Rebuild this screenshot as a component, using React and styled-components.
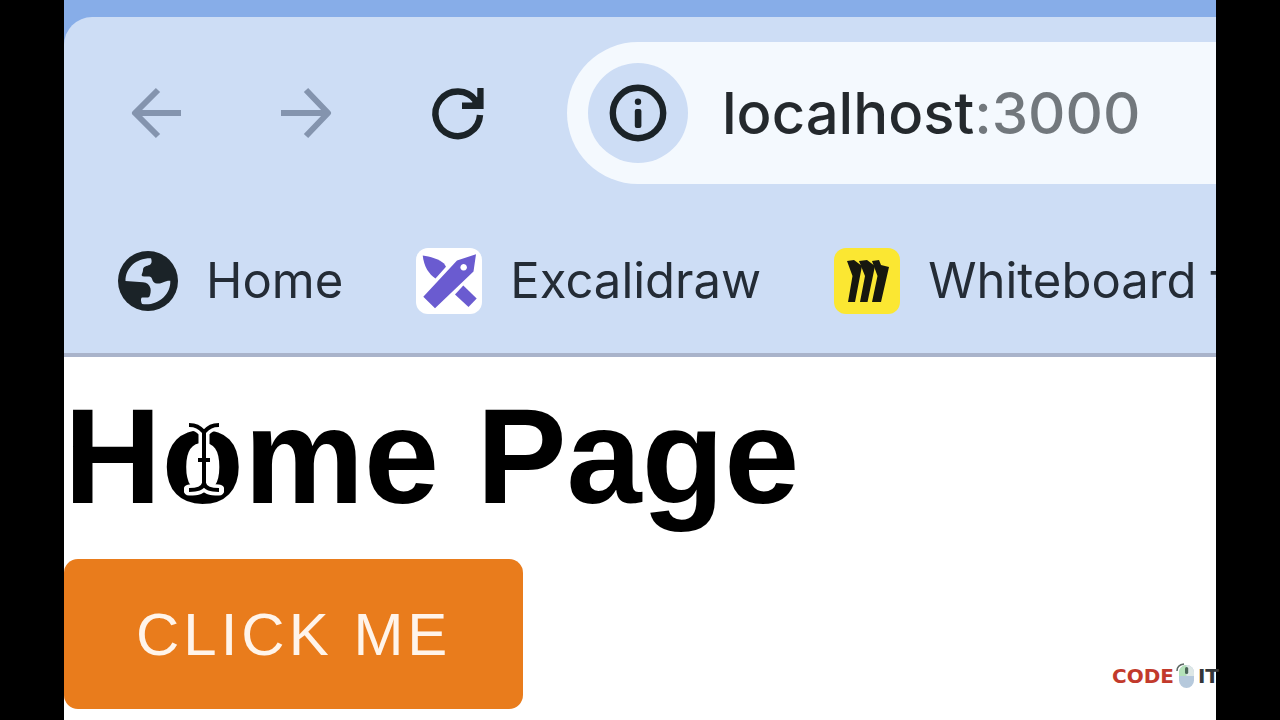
import React, { useState } from 'react';
import styled, { createGlobalStyle } from 'styled-components';

const GlobalStyle = createGlobalStyle`
    * {
        box-sizing: border-box;
    }

    body {
        margin: 0;
        background-color: #000;
        font-family: Inter, "Liberation Sans", sans-serif;
    }
`;

const Stage = styled.div`
    position: relative;
    min-height: 100vh;
    padding: 0 5%;
    overflow: hidden;
`;

const Browser = styled.div`
    display: flex;
    flex-direction: column;
    min-height: 100vh;
    background-color: #fff;
    overflow: hidden;
`;

const TabStrip = styled.div`
    background-color: #87ade8;
    padding-top: 17px;
`;

const Toolbar = styled.header`
    display: flex;
    flex-direction: column;
    gap: 63px;
    padding: 25px 0 39px;
    background-color: #cdddf5;
    border-bottom: 4px solid #a9b3ca;
    border-top-left-radius: 28px;
`;

const NavRow = styled.div`
    display: flex;
    align-items: center;
    padding-left: 62px;
`;

const NavButtons = styled.div`
    display: flex;
    flex-shrink: 0;
    gap: 90px;
    margin-right: 81px;
`;

const IconButton = styled.button`
    display: flex;
    justify-content: center;
    align-items: center;
    flex-shrink: 0;
    width: ${props => props.$size || 60}px;
    height: ${props => props.$size || 60}px;
    padding: 0;
    border: none;
    border-radius: 50%;
    background-color: ${props => props.$filled ? '#cdddf5' : 'transparent'};
    color: ${props => props.$muted ? '#8494ae' : '#1b2328'};
    cursor: pointer;
`;

const AddressBar = styled.div`
    display: flex;
    align-items: center;
    flex: 1;
    min-width: 0;
    height: 142px;
    padding-left: 21px;
    gap: 34px;
    background-color: #f4f9fe;
    border-radius: 72px 0 0 72px;
`;

/* host is dark, port is grey */
const Url = styled.input`
    flex: 1;
    min-width: 0;
    height: 80px;
    padding: 0;
    border: none;
    outline: none;
    font-family: inherit;
    font-size: 58px;
    font-weight: 500;
    color: transparent;
    caret-color: #24292d;
    background: linear-gradient(to right, #24292d 252px, #72787d 252px);
    background-clip: text;
`;

const Bookmarks = styled.nav`
    display: flex;
    align-items: center;
    gap: 73px;
    padding-left: 54px;
    overflow: hidden;
`;

const Bookmark = styled.a`
    display: flex;
    align-items: center;
    flex-shrink: 0;
    gap: 28px;
    height: 67px;
    font-size: 49px;
    line-height: 60px;
    color: #242c36;
    text-decoration: none;
    white-space: nowrap;
`;

const Favicon = styled.span`
    display: flex;
    width: 66px;
    height: 66px;
    border-radius: 12px;
    background-color: ${props => props.$color};
`;

const Page = styled.main`
    position: relative;
    font-family: "Liberation Sans", Arial, sans-serif;
`;

const Title = styled.h1`
    margin: 0;
    font-size: 135px;
    line-height: 200px;
    padding-bottom: 2px;
    font-weight: 700;
    color: #000;
    white-space: nowrap;
`;

const Button = styled.button`
    display: block;
    height: 150px;
    padding: 0 72px;
    border: none;
    border-radius: 14px;
    background-color: #e97c1c;
    color: #fff4ea;
    font-family: inherit;
    font-size: 60px;
    letter-spacing: 4px;
    text-transform: uppercase;
    cursor: pointer;
`;

const Pointer = styled.svg`
    position: absolute;
    top: 63px;
    left: 120px;
    pointer-events: none;
`;

const Watermark = styled.div`
    position: absolute;
    right: calc(5% - 3px);
    bottom: 30px;
    display: flex;
    align-items: center;
    gap: 1px;
    font-family: "DejaVu Sans", sans-serif;
    font-size: 20px;
    line-height: 28px;
    font-weight: 700;
    color: #c23a2c;
`;

const WatermarkEnd = styled.span`
    color: #333639;
`;

const ArrowIcon = ({ forward = false }) => (
    <svg width="60" height="60" viewBox="0 0 60 60" fill="none" stroke="currentColor" strokeWidth="6">
        {
            forward ? <path d="M5 30H51M30 7L52 30L30 53" strokeLinejoin="round" />
            :
            <path d="M55 30H9M32 7L9 30L32 53" strokeLinejoin="round" />
        }
    </svg>
);

const ReloadIcon = () => (
    <svg width="60" height="60" viewBox="0 0 60 60">
        <path d="M54 32A22.3 22.3 0 1 1 50 18" fill="none" stroke="currentColor" strokeWidth="6.4" />
        <path d="M51.3 5H57.6V26H36V19.6H46L51.3 14Z" fill="currentColor" />
    </svg>
);

const InfoIcon = () => (
    <svg width="60" height="60" viewBox="0 0 60 60">
        <circle cx="30" cy="30" r="25.2" fill="none" stroke="currentColor" strokeWidth="6.4" />
        <circle cx="30" cy="18.8" r="3.2" fill="currentColor" />
        <rect x="26.8" y="26" width="6.6" height="19" rx="2" fill="currentColor" />
    </svg>
);

const GlobeIcon = () => (
    <svg width="60" height="60" viewBox="0 0 60 60">
        <circle cx="30" cy="30" r="30" fill="#1b2328" />
        <path
            d="M7.5 30C7.5 17 18 7 33 7.3C34 10 34 13 31.5 14C29 15 25 15 25 19C25 22 22.5 24 24.5 25.2C27 26 31 25 33 26.2C35 28 34 32 39 32.5C44 33 46 29.5 52.3 29.7C53 44 39 55.5 24 53C23 51 22.5 48 23.5 46.7C26 46 30 47.5 31.5 45.5C32.5 43 33 40 32.5 37.5C31.5 33.5 29 31.5 25 31.2Z"
            fill="#cdddf5"
        />
    </svg>
);

const ExcalidrawIcon = () => (
    <svg width="66" height="66" viewBox="0 0 66 66" fill="#6a5bd0">
        <path d="M6.7 7.5C14 8.5 23 11 28 15.5L30 18.7L19.5 30.5C13 26 8 19 6.7 7.5Z" />
        <path d="M60 6.3L41 12.5L7.3 48.7L19 60.3L57.5 23.5ZM47.7 16A3.3 3.3 0 1 1 47.6 16Z" fillRule="evenodd" />
        <path d="M39 46.5L47.3 37.5L60.7 50.5L52.5 59Z" />
    </svg>
);

const MiroIcon = () => (
    <svg width="66" height="66" viewBox="0 0 66 66" fill="#17170f">
        <path d="M13 13L20 12L28 18L21 54H14L18.5 28Z" />
        <path d="M25 13L33 12L41 18L33.5 54H26L31 28Z" />
        <path d="M38 13L45 12L47 17L55 19L47 54H38L43.5 28Z" />
    </svg>
);

const MouseIcon = () => (
    <svg width="22" height="28" viewBox="0 0 22 28">
        <path d="M2 9C2 5 5 2.5 9 2" fill="none" stroke="#5c6864" strokeWidth="1.5" />
        <rect x="4" y="3" width="15" height="23" rx="7.5" fill="#b6c9dc" />
        <path d="M4 14V10.5A7.5 7.5 0 0 1 11.5 3V14Z" fill="#b4e2b9" />
        <path d="M11.5 14V3A7.5 7.5 0 0 1 19 10.5V14Z" fill="#dde7e6" />
        <rect x="10" y="5" width="3.2" height="7" rx="1.6" fill="#4a6658" />
    </svg>
);

const beam = 'M5 5C12 5 15 7 20 12C25 7 28 5 35 5M20 12V65M14 40H26M5 70C13 70 19 69 20 63C21 69 27 70 35 70';

const TextPointer = () => (
    <Pointer width="40" height="80" viewBox="0 0 40 80" fill="none">
        <path d={beam} stroke="#fff" strokeWidth="11" strokeLinejoin="round" strokeLinecap="round" />
        <path d={beam} stroke="#000" strokeWidth="4" />
    </Pointer>
);

const App = () => {

    const [ url, setUrl ] = useState('localhost:3000');

    return (
        <Stage>
            <GlobalStyle />
            <Browser>
                <TabStrip>
                    <Toolbar>
                        <NavRow>
                            <NavButtons>
                                <IconButton $muted aria-label="Back"><ArrowIcon /></IconButton>
                                <IconButton $muted aria-label="Forward"><ArrowIcon forward /></IconButton>
                                <IconButton aria-label="Reload"><ReloadIcon /></IconButton>
                            </NavButtons>
                            <AddressBar>
                                <IconButton $size={100} $filled aria-label="Site information"><InfoIcon /></IconButton>
                                <Url
                                    aria-label="Address"
                                    spellCheck={false}
                                    value={url}
                                    onChange={(e) => { setUrl(e.target.value) }}
                                />
                            </AddressBar>
                        </NavRow>
                        <Bookmarks>
                            <Bookmark href="#home"><GlobeIcon />Home</Bookmark>
                            <Bookmark href="#excalidraw"><Favicon $color="#fff"><ExcalidrawIcon /></Favicon>Excalidraw</Bookmark>
                            <Bookmark href="#whiteboard"><Favicon $color="#fbe732"><MiroIcon /></Favicon>Whiteboard f</Bookmark>
                        </Bookmarks>
                    </Toolbar>
                </TabStrip>
                <Page>
                    <Title>Home Page</Title>
                    <TextPointer />
                    <Button>Click me</Button>
                </Page>
            </Browser>
            <Watermark>
                <span>CODE</span>
                <MouseIcon />
                <WatermarkEnd>IT</WatermarkEnd>
            </Watermark>
        </Stage>
    );
}

export default App;
